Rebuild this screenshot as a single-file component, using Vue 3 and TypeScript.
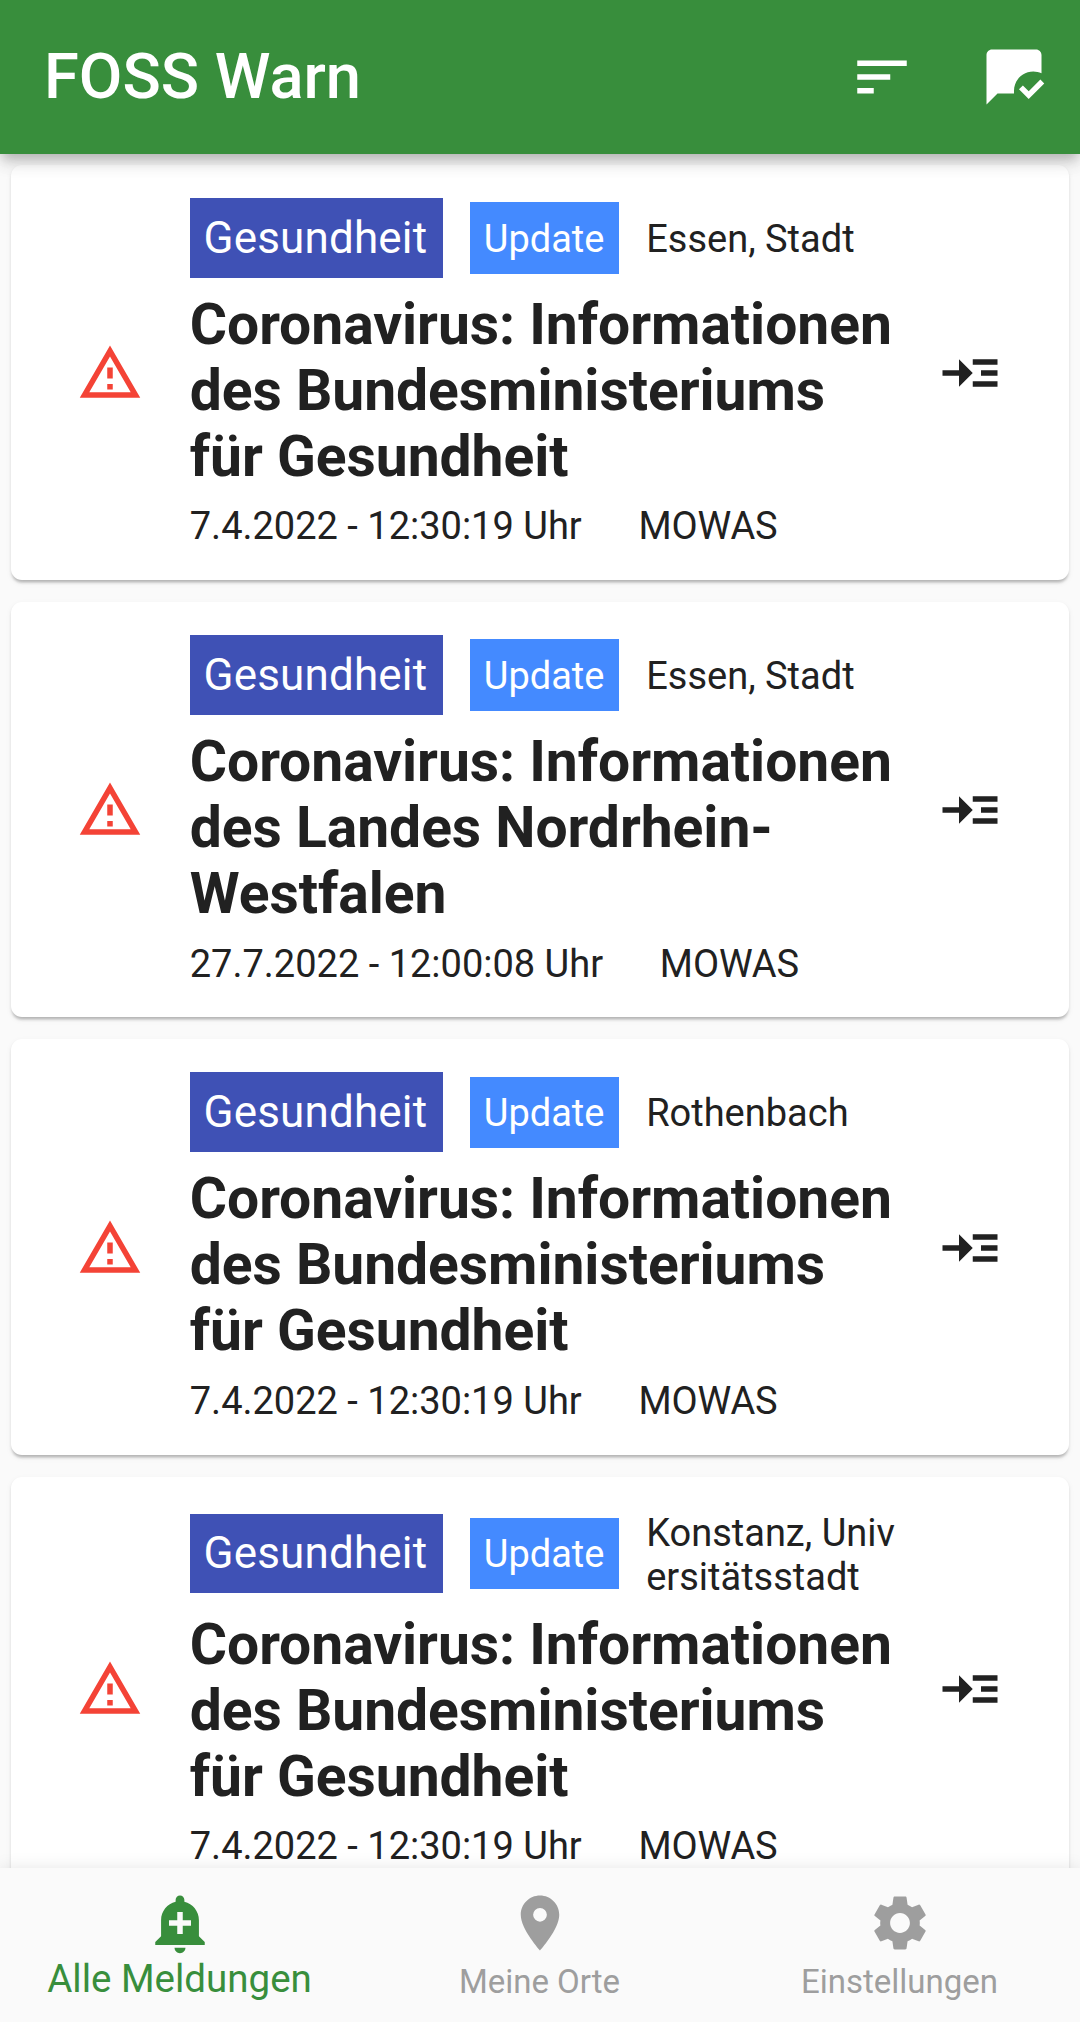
<script setup lang="ts">
interface Warning {
  place: string
  title: string
  date: string
}

const warnings: Warning[] = [
  {
    place: 'Essen, Stadt',
    title: 'Coronavirus: Informationen\ndes Bundesministeriums\nfür Gesundheit',
    date: '7.4.2022 - 12:30:19 Uhr',
  },
  {
    place: 'Essen, Stadt',
    title: 'Coronavirus: Informationen\ndes Landes Nordrhein-\nWestfalen',
    date: '27.7.2022 - 12:00:08 Uhr',
  },
  {
    place: 'Rothenbach',
    title: 'Coronavirus: Informationen\ndes Bundesministeriums\nfür Gesundheit',
    date: '7.4.2022 - 12:30:19 Uhr',
  },
  {
    place: 'Konstanz, Univ\nersitätsstadt',
    title: 'Coronavirus: Informationen\ndes Bundesministeriums\nfür Gesundheit',
    date: '7.4.2022 - 12:30:19 Uhr',
  },
]

const tabs = [
  {
    label: 'Alle Meldungen',
    active: true,
    path: 'M10.01 21.01c0 1.1.89 1.99 1.99 1.99s1.99-.89 1.99-1.99h-3.98zm8.87-4.19V11c0-3.25-2.25-5.97-5.29-6.69v-.72C13.59 2.71 12.88 2 12 2s-1.59.71-1.59 1.59v.72C7.37 5.03 5.12 7.75 5.12 11v5.82L3 18.94V20h18v-1.06l-2.12-2.12zM16 13.01h-3v3h-2v-3H8V11h3V8h2v3h3v2.01z',
  },
  {
    label: 'Meine Orte',
    active: false,
    path: 'M12 2C8.13 2 5 5.13 5 9c0 5.25 7 13 7 13s7-7.75 7-13c0-3.87-3.13-7-7-7zm0 9.5a2.5 2.5 0 0 1 0-5 2.5 2.5 0 0 1 0 5z',
  },
  {
    label: 'Einstellungen',
    active: false,
    path: 'M19.14 12.94c.04-.3.06-.61.06-.94 0-.32-.02-.64-.07-.94l2.03-1.58c.18-.14.23-.41.12-.61l-1.92-3.32c-.12-.22-.37-.29-.59-.22l-2.39.96c-.5-.38-1.03-.7-1.62-.94L14.4 2.81c-.04-.24-.24-.41-.48-.41h-3.84c-.24 0-.43.17-.47.41L9.25 5.35C8.66 5.59 8.12 5.92 7.63 6.29L5.24 5.33c-.22-.08-.47 0-.59.22L2.74 8.87c-.12.21-.08.47.12.61l2.03 1.58C4.84 11.36 4.8 11.69 4.8 12s.02.64.07.94l-2.03 1.58c-.18.14-.23.41-.12.61l1.92 3.32c.12.22.37.29.59.22l2.39-.96c.5.38 1.03.7 1.62.94l.36 2.54c.05.24.24.41.48.41h3.84c.24 0 .44-.17.47-.41l.36-2.54c.59-.24 1.13-.56 1.62-.94l2.39.96c.22.08.47 0 .59-.22l1.92-3.32c.12-.22.07-.47-.12-.61l-2.01-1.58zM12 15.6c-1.98 0-3.6-1.62-3.6-3.6s1.62-3.6 3.6-3.6 3.6 1.62 3.6 3.6-1.62 3.6-3.6 3.6z',
  },
]
</script>

<template>
  <div class="screen">
    <header class="app-bar">
      <h1>FOSS Warn</h1>
      <svg class="icon sort" viewBox="0 0 24 24"><path d="M3 18h6v-2H3v2zM3 6v2h18V6H3zm0 7h12v-2H3v2z" /></svg>
      <svg class="icon" viewBox="0 0 24 24">
        <path d="M12 17c0-3.87 3.13-7 7-7 1.08 0 2.09.25 3 .68V4c0-1.1-.9-2-2-2H4c-1.1 0-2 .9-2 2v18l4-4h6v-1z" />
        <path d="M23 14.34 21.59 12.93 17.35 17.17 15.23 15.05 13.81 16.46 17.34 20z" />
      </svg>
    </header>

    <main class="list">
      <article v-for="(w, i) in warnings" :key="i" class="card">
        <svg class="icon alert" viewBox="0 0 24 24">
          <path d="M12 5.99 19.53 19H4.47L12 5.99M12 2 1 21h22L12 2zm1 14h-2v2h2v-2zm0-6h-2v4h2v-4z" />
        </svg>
        <div class="body">
          <div class="tags">
            <span class="tag category">Gesundheit</span>
            <span class="tag update">Update</span>
            <span class="place">{{ w.place }}</span>
          </div>
          <h2>{{ w.title }}</h2>
          <div class="meta">
            <span class="date">{{ w.date }}</span>
            <span class="source">MOWAS</span>
          </div>
        </div>
        <svg class="icon more" viewBox="0 0 24 24">
          <path d="M13 7h9v2h-9V7zm0 8h9v2h-9v-2zm3-4h6v2h-6v-2zm-3 1L8 7v4H2v2h6v4l5-5z" />
        </svg>
      </article>
    </main>

    <nav class="tab-bar">
      <div v-for="t in tabs" :key="t.label" class="tab" :class="{ active: t.active }">
        <svg class="icon" viewBox="0 0 24 24"><path :d="t.path" /></svg>
        <span>{{ t.label }}</span>
      </div>
    </nav>
  </div>
</template>

<style>
body {
  margin: 0;
  background: #fafafa;
}
</style>

<style scoped>
.screen {
  box-sizing: border-box;
  display: flex;
  flex-direction: column;
  width: 1080px;
  height: 2022px;
  overflow: hidden;
  background: #fafafa;
  color: #212121;
  font-family: Roboto, sans-serif;
  font-size: 38px;
  line-height: 44px;
}

.icon {
  display: block;
  flex: none;
  width: 66px;
  height: 66px;
  fill: currentColor;
}

.app-bar {
  position: relative;
  z-index: 1;
  box-sizing: border-box;
  display: flex;
  flex: none;
  align-items: center;
  height: 154px;
  padding: 0 33.25px 0 44px;
  background: #388e3c;
  color: #fff;
  box-shadow:
    0 5.5px 11px -2.75px rgba(0, 0, 0, 0.2),
    0 11px 13.75px 0 rgba(0, 0, 0, 0.1),
    0 2.75px 27.5px 0 rgba(0, 0, 0, 0.06);
}

h1 {
  flex: 1;
  margin: 0;
  padding-bottom: 2px;
  font-size: 63.25px;
  font-weight: 500;
  line-height: 74px;
}

.sort {
  margin-right: 66px;
}

.list {
  display: flex;
  flex: 1;
  flex-direction: column;
  gap: 22px;
  min-height: 0;
  padding: 11px 11px 0;
  overflow: hidden;
}

.card {
  box-sizing: border-box;
  display: flex;
  flex: none;
  align-items: center;
  padding: 33px 66.25px 31.75px;
  border-radius: 11px;
  background: #fff;
  box-shadow:
    0 4.5px 2.75px -2.75px rgba(0, 0, 0, 0.16),
    0 2.25px 2.75px 0 rgba(0, 0, 0, 0.1),
    0 2.75px 6px 0 rgba(0, 0, 0, 0.05);
}

.alert {
  color: #f44336;
}

.body {
  flex: 1;
  min-width: 0;
  margin-left: 46.5px;
  white-space: nowrap;
}

.tags {
  display: flex;
  align-items: center;
  margin-bottom: 14px;
}

.tag {
  margin-right: 27.5px;
  padding: 13.75px;
  color: #fff;
}

.category {
  padding-right: 15.25px;
  background: #3f51b5;
  font-size: 44px;
  letter-spacing: 0.17px;
  line-height: 52.25px;
}

.update {
  margin-right: 27px;
  padding: 14.5px 14.75px 13px 13.75px;
  background: #448aff;
}

.place {
  margin: 1px 0 -1px;
  white-space: pre;
}

h2 {
  margin: 0;
  font-size: 57px;
  font-weight: 700;
  letter-spacing: -0.04px;
  line-height: 66px;
  white-space: pre;
}

.meta {
  display: flex;
  margin-top: 14.7px;
}

.date {
  margin-right: 56.75px;
}

.source {
  letter-spacing: -0.1px;
}

.tab-bar {
  position: relative;
  display: flex;
  flex: none;
  height: 154px;
  background: #fafafa;
  box-shadow: 0 0 16px rgba(0, 0, 0, 0.1);
}

.tab {
  box-sizing: border-box;
  display: flex;
  flex: 1;
  flex-direction: column;
  align-items: center;
  padding-top: 22px;
  color: #9e9e9e;
  font-size: 33px;
}

.tab span {
  margin-top: 3.5px;
  margin-right: 1px;
}

.tab.active {
  color: #388e3c;
  font-size: 38.5px;
}

.tab.active span {
  margin-top: 1px;
}
</style>
